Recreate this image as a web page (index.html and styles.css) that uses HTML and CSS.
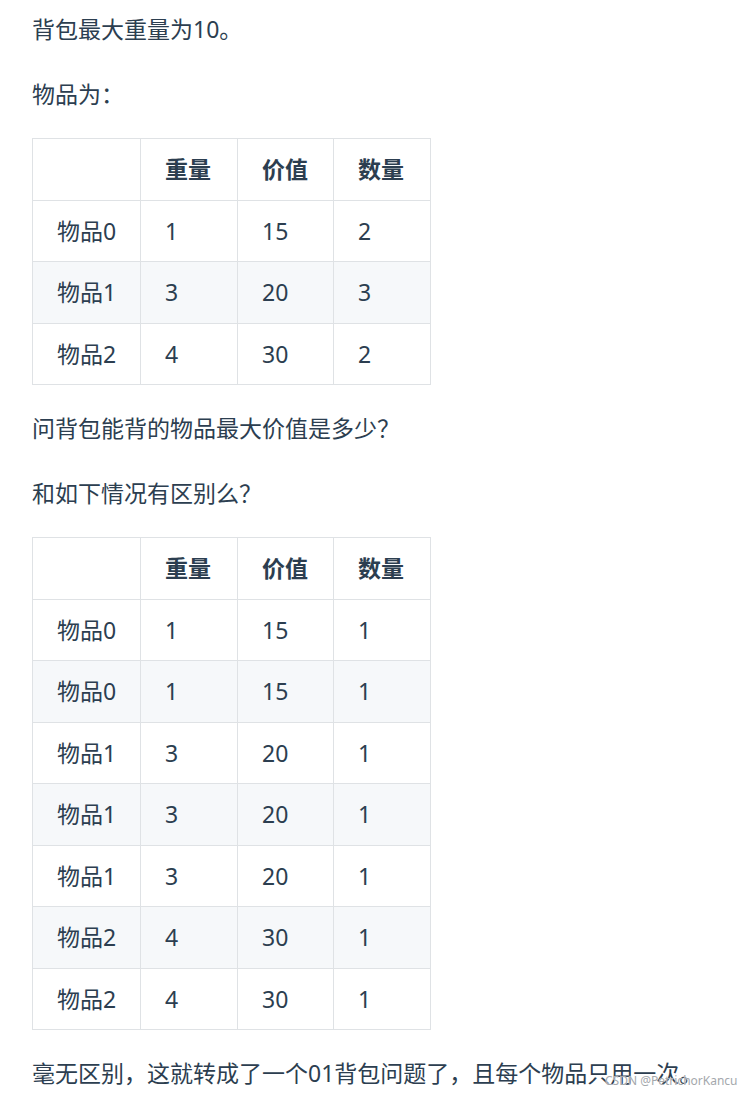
FILE: index.html
```html
<!DOCTYPE html>
<html lang="zh-CN">
<head>
<meta charset="utf-8">
<title>背包问题</title>
<link rel="stylesheet" href="styles.css">
</head>
<body>
<main class="article">
  <p class="first">背包最大重量为10。</p>
  <p>物品为：</p>
  <table class="grid">
    <colgroup><col class="c1"><col class="c2"><col class="c3"><col class="c4"></colgroup>
    <thead>
      <tr><th></th><th>重量</th><th>价值</th><th>数量</th></tr>
    </thead>
    <tbody>
      <tr><td>物品0</td><td>1</td><td>15</td><td>2</td></tr>
      <tr><td>物品1</td><td>3</td><td>20</td><td>3</td></tr>
      <tr><td>物品2</td><td>4</td><td>30</td><td>2</td></tr>
    </tbody>
  </table>
  <p>问背包能背的物品最大价值是多少？</p>
  <p>和如下情况有区别么？</p>
  <table class="grid">
    <colgroup><col class="c1"><col class="c2"><col class="c3"><col class="c4"></colgroup>
    <thead>
      <tr><th></th><th>重量</th><th>价值</th><th>数量</th></tr>
    </thead>
    <tbody>
      <tr><td>物品0</td><td>1</td><td>15</td><td>1</td></tr>
      <tr><td>物品0</td><td>1</td><td>15</td><td>1</td></tr>
      <tr><td>物品1</td><td>3</td><td>20</td><td>1</td></tr>
      <tr><td>物品1</td><td>3</td><td>20</td><td>1</td></tr>
      <tr><td>物品1</td><td>3</td><td>20</td><td>1</td></tr>
      <tr><td>物品2</td><td>4</td><td>30</td><td>1</td></tr>
      <tr><td>物品2</td><td>4</td><td>30</td><td>1</td></tr>
    </tbody>
  </table>
  <p>毫无区别，这就转成了一个01背包问题了，且每个物品只用一次。</p>
</main>
<span class="watermark">CSDN @PetrichorKancu</span>
</body>
</html>
```

FILE: styles.css
```css
html, body {
  margin: 0;
  padding: 0;
  background: #ffffff;
}

body {
  position: relative;
  width: 744px;
  height: 1094px;
  overflow: hidden;
  font-family: "Noto Sans", "Noto Sans CJK SC", sans-serif;
  font-size: 23px;
  line-height: 41.5px;
  color: #2c3e50;
}

.article {
  padding: 9px 0 0 32px;
}

.article p {
  margin: 23px 0;
}

.article p.first {
  margin-top: 0;
}

.grid {
  border-collapse: collapse;
  table-layout: fixed;
  width: 398px;
  margin: 23px 0;
}

.grid .c1 { width: 108px; }
.grid .c2 { width: 97px; }
.grid .c3 { width: 96px; }
.grid .c4 { width: 97px; }

.grid th,
.grid td {
  border: 1px solid #dfe2e5;
  padding: 10px 24px;
  line-height: 40.5px;
  text-align: left;
  white-space: nowrap;
}

.grid th {
  font-weight: 700;
}

.grid tbody tr:nth-child(2n) {
  background: #f6f8fa;
}

.watermark {
  position: absolute;
  left: 605px;
  top: 1072px;
  white-space: nowrap;
  font-family: "Noto Sans", sans-serif;
  font-size: 12px;
  line-height: 18px;
  color: #a4a8ac;
  text-shadow: 0 0 1px #ffffff;
}
```
